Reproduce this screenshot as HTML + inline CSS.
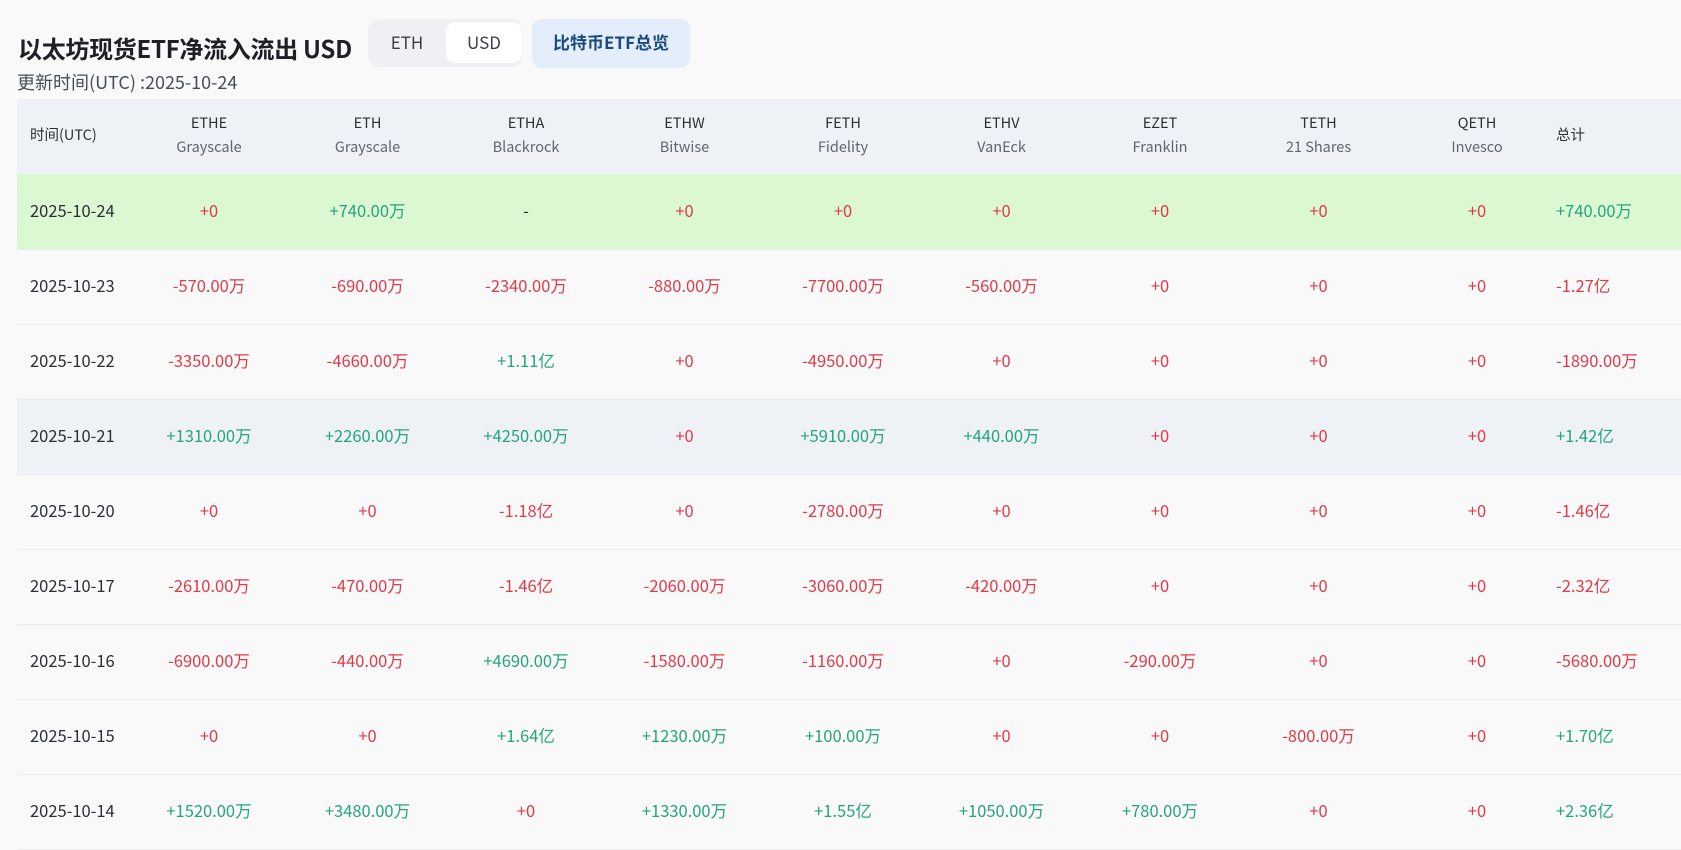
<!DOCTYPE html>
<html><head><meta charset="utf-8"><style>
*{margin:0;padding:0;box-sizing:border-box}
body{width:1681px;height:850px;overflow:hidden;background:#f9f9f9;font-family:"Noto Sans CJK SC",sans-serif;color:#2b2f36;position:relative}
.title{position:absolute;left:18px;top:31px;font-size:24px;line-height:34px;font-weight:bold;color:#1e2026;letter-spacing:-0.3px}
.tog{position:absolute;left:368px;top:19px;width:155px;height:48px;background:#eef0f3;border-radius:12px}
.tog span{position:absolute;top:3px;height:41px;line-height:40px;text-align:center;font-size:17px;color:#3a3f47}
.tog .a{left:0;width:78px}
.tog .b{left:78px;width:76px;background:#fff;border-radius:10px}
.blue{position:absolute;left:532px;top:19px;width:158px;height:49px;background:#e3eefa;border-radius:10px;color:#1a4a80;font-weight:bold;font-size:17px;line-height:46px;text-align:center}
.sub{position:absolute;left:17px;top:69px;font-size:18px;line-height:26px;color:#474d57}
table{position:absolute;left:17px;top:99px;width:1664px;border-collapse:collapse;font-size:16.5px;line-height:22px}
th{background:#eef1f5;height:75px;font-weight:normal;font-size:14.5px;color:#2b2f36;line-height:24px;vertical-align:middle;padding-bottom:3px}
th small{display:block;font-size:14.5px;color:#5e6673}
td{height:75px;text-align:center;border-bottom:1px solid #e8eaed;vertical-align:middle;padding-bottom:3px}
td:first-child,th:first-child{text-align:left;padding-left:13px}
th:last-child,td:last-child{text-align:left;padding-left:0}
tr.g td{background:#dbf8d2}
tr.h td{background:#eef1f5}
.r{color:#e03a4a}.n{color:#25a47e}
</style></head><body>
<div class="title">以太坊现货ETF净流入流出 USD</div>
<div class="tog"><span class="a">ETH</span><span class="b">USD</span></div>
<div class="blue">比特币ETF总览</div>
<div class="sub">更新时间(UTC) :2025-10-24</div>
<table>
<colgroup><col style="width:113px"><col style="width:158px"><col style="width:159px"><col style="width:158px"><col style="width:159px"><col style="width:158px"><col style="width:159px"><col style="width:158px"><col style="width:159px"><col style="width:158px"><col></colgroup>
<tr><th>时间(UTC)</th><th>ETHE<small>Grayscale</small></th><th>ETH<small>Grayscale</small></th><th>ETHA<small>Blackrock</small></th><th>ETHW<small>Bitwise</small></th><th>FETH<small>Fidelity</small></th><th>ETHV<small>VanEck</small></th><th>EZET<small>Franklin</small></th><th>TETH<small>21 Shares</small></th><th>QETH<small>Invesco</small></th><th>总计</th></tr>
<tr class="g"><td>2025-10-24</td><td class="r">+0</td><td class="n">+740.00万</td><td>-</td><td class="r">+0</td><td class="r">+0</td><td class="r">+0</td><td class="r">+0</td><td class="r">+0</td><td class="r">+0</td><td class="n">+740.00万</td></tr>
<tr><td>2025-10-23</td><td class="r">-570.00万</td><td class="r">-690.00万</td><td class="r">-2340.00万</td><td class="r">-880.00万</td><td class="r">-7700.00万</td><td class="r">-560.00万</td><td class="r">+0</td><td class="r">+0</td><td class="r">+0</td><td class="r">-1.27亿</td></tr>
<tr><td>2025-10-22</td><td class="r">-3350.00万</td><td class="r">-4660.00万</td><td class="n">+1.11亿</td><td class="r">+0</td><td class="r">-4950.00万</td><td class="r">+0</td><td class="r">+0</td><td class="r">+0</td><td class="r">+0</td><td class="r">-1890.00万</td></tr>
<tr class="h"><td>2025-10-21</td><td class="n">+1310.00万</td><td class="n">+2260.00万</td><td class="n">+4250.00万</td><td class="r">+0</td><td class="n">+5910.00万</td><td class="n">+440.00万</td><td class="r">+0</td><td class="r">+0</td><td class="r">+0</td><td class="n">+1.42亿</td></tr>
<tr><td>2025-10-20</td><td class="r">+0</td><td class="r">+0</td><td class="r">-1.18亿</td><td class="r">+0</td><td class="r">-2780.00万</td><td class="r">+0</td><td class="r">+0</td><td class="r">+0</td><td class="r">+0</td><td class="r">-1.46亿</td></tr>
<tr><td>2025-10-17</td><td class="r">-2610.00万</td><td class="r">-470.00万</td><td class="r">-1.46亿</td><td class="r">-2060.00万</td><td class="r">-3060.00万</td><td class="r">-420.00万</td><td class="r">+0</td><td class="r">+0</td><td class="r">+0</td><td class="r">-2.32亿</td></tr>
<tr><td>2025-10-16</td><td class="r">-6900.00万</td><td class="r">-440.00万</td><td class="n">+4690.00万</td><td class="r">-1580.00万</td><td class="r">-1160.00万</td><td class="r">+0</td><td class="r">-290.00万</td><td class="r">+0</td><td class="r">+0</td><td class="r">-5680.00万</td></tr>
<tr><td>2025-10-15</td><td class="r">+0</td><td class="r">+0</td><td class="n">+1.64亿</td><td class="n">+1230.00万</td><td class="n">+100.00万</td><td class="r">+0</td><td class="r">+0</td><td class="r">-800.00万</td><td class="r">+0</td><td class="n">+1.70亿</td></tr>
<tr><td>2025-10-14</td><td class="n">+1520.00万</td><td class="n">+3480.00万</td><td class="r">+0</td><td class="n">+1330.00万</td><td class="n">+1.55亿</td><td class="n">+1050.00万</td><td class="n">+780.00万</td><td class="r">+0</td><td class="r">+0</td><td class="n">+2.36亿</td></tr>
</table>
</body></html>
